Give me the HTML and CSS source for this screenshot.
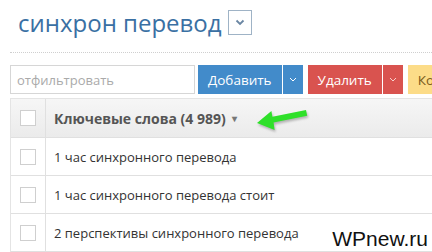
FILE: index.html
```html
<!DOCTYPE html>
<html>
<head>
    <title>синхрон перевод</title>
    <link rel="stylesheet" href="styles.css">
</head>
<body>
    <div class="page">
        <div class="title-row">
            <h1 class="title">синхрон перевод</h1>
            <span class="title-toggle">
                <svg width="10" height="7" viewBox="0 0 10 7"><path d="M1.5 1.5 L5 5 L8.5 1.5" fill="none" stroke="#6a86a3" stroke-width="1.8"/></svg>
            </span>
        </div>

        <div class="toolbar">
            <input class="filter" type="text" placeholder="отфильтровать">
            <div class="btn-group">
                <button class="btn btn-blue">Добавить</button>
                <button class="btn btn-blue btn-caret">
                    <svg width="8" height="5" viewBox="0 0 8 5"><path d="M1 1 L4 4 L7 1" fill="none" stroke="#fff" stroke-width="1"/></svg>
                </button>
            </div>
            <div class="btn-group">
                <button class="btn btn-red">Удалить</button>
                <button class="btn btn-red btn-caret">
                    <svg width="8" height="5" viewBox="0 0 8 5"><path d="M1 1 L4 4 L7 1" fill="none" stroke="#f6d0cc" stroke-width="1"/></svg>
                </button>
            </div>
            <button class="btn btn-yellow">Копировать</button>
        </div>

        <div class="grid">
            <div class="grid-row grid-head">
                <div class="cell-check"><span class="checkbox"></span></div>
                <div class="cell-text">Ключевые слова (4 989) <span class="sort">&#9662;</span></div>
            </div>
            <div class="grid-row">
                <div class="cell-check"><span class="checkbox"></span></div>
                <div class="cell-text">1 час синхронного перевода</div>
            </div>
            <div class="grid-row">
                <div class="cell-check"><span class="checkbox"></span></div>
                <div class="cell-text">1 час синхронного перевода стоит</div>
            </div>
            <div class="grid-row">
                <div class="cell-check"><span class="checkbox"></span></div>
                <div class="cell-text">2 перспективы синхронного перевода</div>
            </div>
        </div>
    </div>

    <svg class="pointer" width="60" height="32" viewBox="0 0 60 32">
        <polygon points="6,19 20.4,7 21.4,12.8 55,6 56.2,11.8 22.6,18.6 23.6,26" fill="#2fe02a"/>
    </svg>

    <div class="watermark">WPnew.ru</div>
</body>
</html>
```

FILE: styles.css
```css
* {
    box-sizing: border-box;
}

body {
    margin: 0;
    padding: 0;
    width: 432px;
    height: 252px;
    overflow: hidden;
    background: #fff;
    font-family: 'Open Sans', 'Noto Sans', sans-serif;
    position: relative;
}

.page {
    padding-left: 10px;
    width: 600px;
}

.title-row {
    display: flex;
    align-items: center;
    gap: 6px;
    height: 53px;
    padding: 10px 0 17px 8px;
    border-bottom: 1px dotted #cfcfcf;
}

.title {
    margin: 0;
    font-size: 24px;
    font-weight: 400;
    line-height: 25px;
    color: #3a70a3;
}

.title-toggle {
    width: 24px;
    height: 25px;
    border: 1px solid #9fb3c6;
    display: flex;
    align-items: center;
    justify-content: center;
}

.toolbar {
    display: flex;
    align-items: center;
    height: 29px;
    margin-top: 12px;
}

.filter {
    width: 185px;
    height: 29px;
    margin: 0 3px 0 0;
    padding: 0 6px;
    border: 1px solid #d6d6d6;
    font-family: inherit;
    font-size: 13px;
    color: #333;
    outline: none;
}

.filter::placeholder {
    color: #aaa;
}

.btn-group {
    display: flex;
    margin-right: 5px;
}

.btn {
    height: 29px;
    border: 0;
    padding: 0 10px;
    font-family: inherit;
    font-size: 13.5px;
    color: #fff;
    display: flex;
    align-items: center;
}

.btn-blue {
    background: #428bca;
}

.btn-red {
    background: #d9534f;
}

.btn-caret {
    width: 20px;
    padding: 0;
    justify-content: center;
    margin-left: 1px;
}

.btn-yellow {
    background: #fcdc88;
    color: #7a5a1a;
}

.grid {
    margin-top: 4px;
    border-top: 1px solid #e4e4e4;
    border-left: 1px solid #e4e4e4;
}

.grid-row {
    display: flex;
    height: 38px;
    border-bottom: 1px solid #e0e0e0;
}

.grid-head {
    height: 39px;
    background: linear-gradient(#f6f6f6, #ebebeb);
}

.cell-check {
    width: 35px;
    border-right: 1px solid #e0e0e0;
    display: flex;
    align-items: center;
    justify-content: center;
}

.checkbox {
    width: 16px;
    height: 16px;
    border: 1px solid #cfcfcf;
    background: #fff;
}

.cell-text {
    display: flex;
    align-items: center;
    padding-left: 8px;
    font-size: 13px;
    color: #333;
}

.grid-head .cell-text {
    font-size: 14px;
    font-weight: 700;
    color: #555;
}

.sort {
    font-size: 10px;
    color: #777;
    margin-left: 6px;
}

.pointer {
    position: absolute;
    left: 251px;
    top: 104px;
    filter: drop-shadow(1px 2px 1px rgba(0, 0, 0, 0.25));
}

.watermark {
    position: absolute;
    right: 4px;
    top: 227px;
    font-family: 'Liberation Sans', Arial, sans-serif;
    font-size: 21px;
    color: #111;
}
```
